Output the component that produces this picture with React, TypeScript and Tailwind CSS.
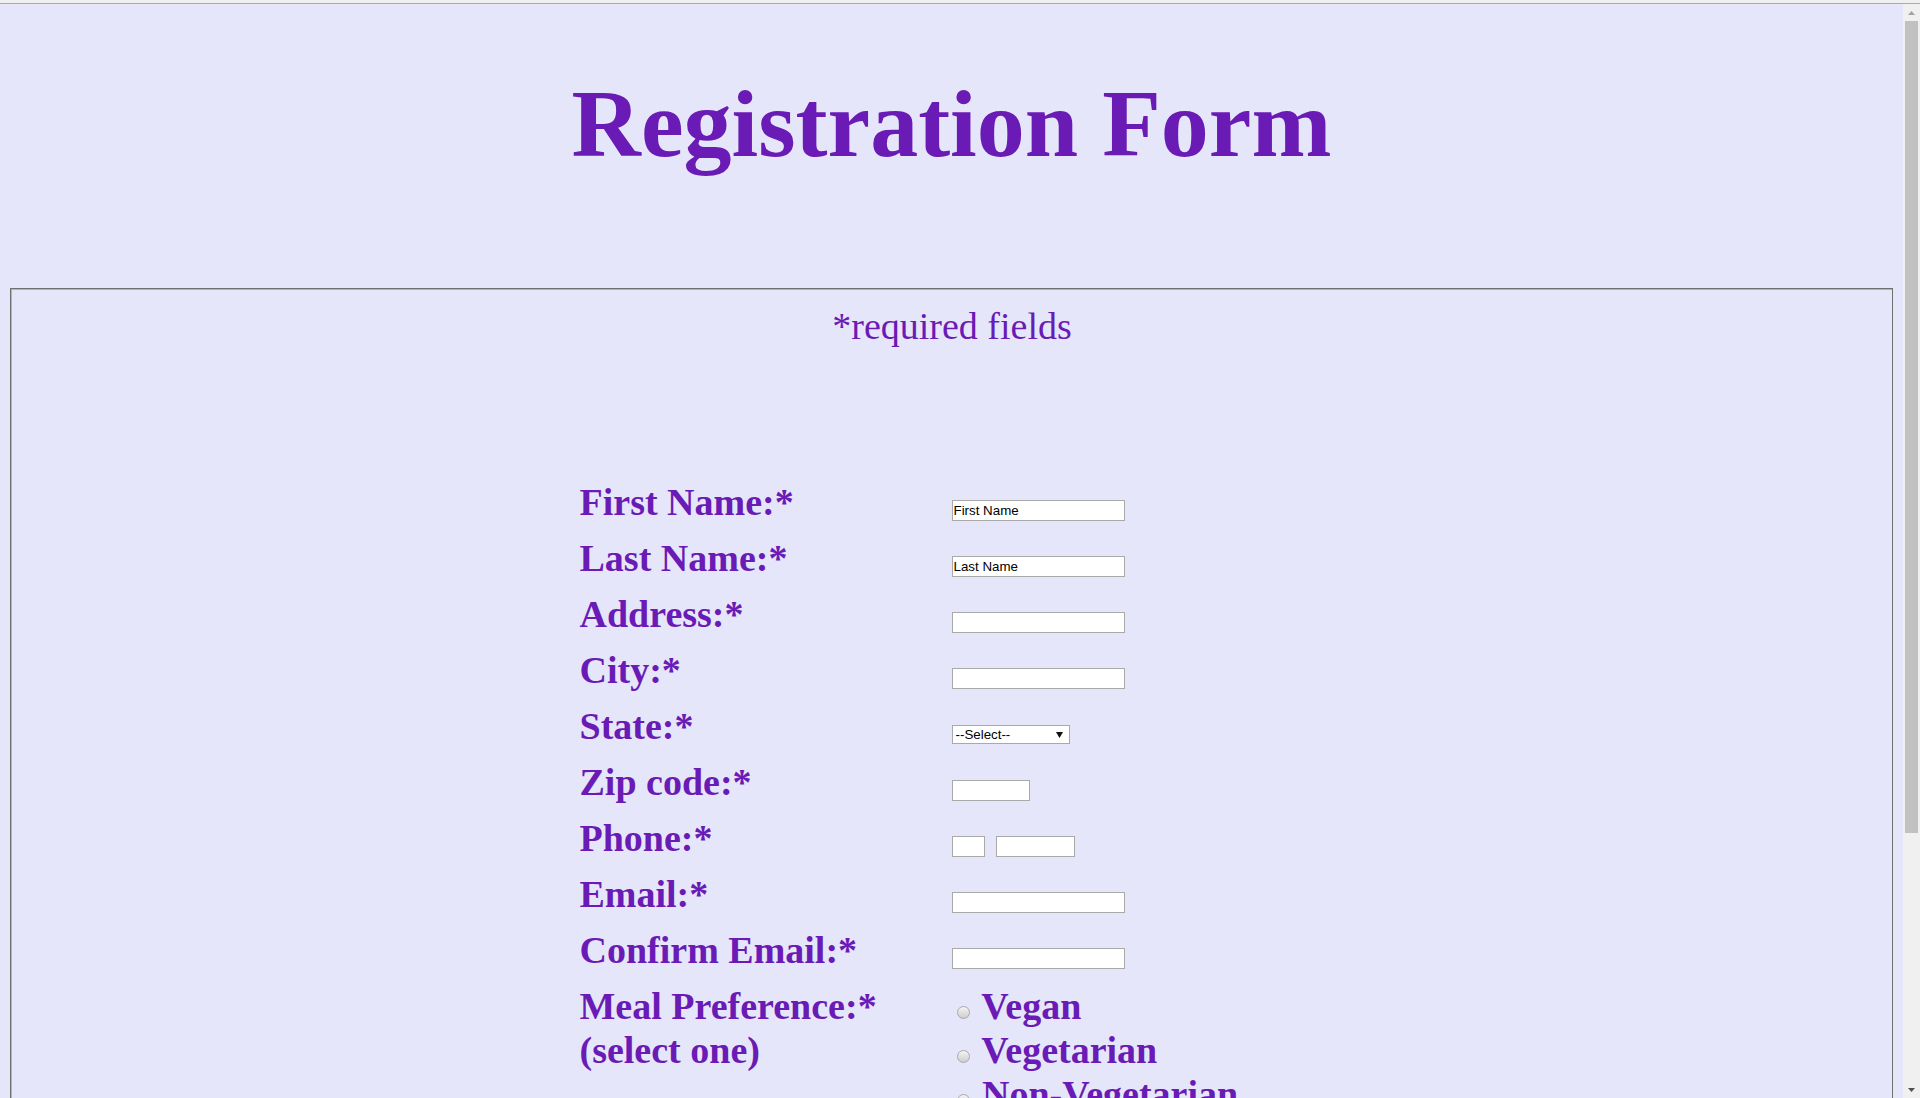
import React from "react";

const inputCls =
  "h-[21px] border border-[#a9a9a9] bg-white px-[1px] py-[1px] text-[13.33px] leading-[15px] font-normal text-black font-['Liberation_Sans',Arial,sans-serif] outline-none";

function Radio({ label }: { label: string }) {
  return (
    <div className="leading-[44px] whitespace-nowrap">
      <span className="inline-block w-[13px] h-[13px] ml-[5px] mr-[3px] rounded-full border border-[#a9a9a9] bg-linear-to-b from-[#f4f4f4] to-[#cdcdcd]" />{" "}
      {label}
    </div>
  );
}

function Row({ label, children }: { label: React.ReactNode; children: React.ReactNode }) {
  return (
    <div className="flex items-baseline">
      <div className="w-[372px] shrink-0 leading-[44px]">{label}</div>
      <div className="flex items-baseline">{children}</div>
    </div>
  );
}

function Scrollbar() {
  return (
    <div className="w-[17px] shrink-0 bg-[#f0f0f0] flex flex-col">
      <div className="h-[17px] flex items-center justify-center">
        <svg width="7" height="4" viewBox="0 0 7 4">
          <polygon points="3.5,0 7,4 0,4" fill="#a3a3a3" />
        </svg>
      </div>
      <div className="h-[812px] mx-[2px] bg-[#c1c1c1]" />
      <div className="flex-1" />
      <div className="h-[17px] flex items-center justify-center">
        <svg width="7" height="4" viewBox="0 0 7 4">
          <polygon points="0,0 7,0 3.5,4" fill="#505050" />
        </svg>
      </div>
    </div>
  );
}

export default function App() {
  return (
    <div className="h-[1098px] w-full overflow-hidden bg-[#e6e6fa] flex flex-col">
      <div className="h-[3px] bg-[#f0f0f0] shrink-0" />
      <div className="h-px bg-[#a9a9a9] shrink-0" />
      <div className="flex flex-1 min-h-0">
        <main className="flex-1 min-w-0 overflow-hidden font-['Liberation_Serif','Times_New_Roman',serif] text-[#6a1bb5]">
          <h1 className="mt-[65px] text-center text-[96px] leading-[110px] font-bold">
            Registration Form
          </h1>
          <div className="mt-[109px] mx-[10px] border border-[#707070]">
            <div className="border-t border-l border-[#b4b4b4] pt-[14px] pb-[40px]">
              <p className="text-center text-[38px] leading-[44px]">*required fields</p>
              <div className="mt-[132px] w-[745px] mx-auto flex flex-col gap-[12px] text-[38px] font-bold">
                <Row label="First Name:*">
                  <input className={`${inputCls} w-[173px]`} defaultValue="First Name" />
                </Row>
                <Row label="Last Name:*">
                  <input className={`${inputCls} w-[173px]`} defaultValue="Last Name" />
                </Row>
                <Row label="Address:*">
                  <input className={`${inputCls} w-[173px]`} />
                </Row>
                <Row label="City:*">
                  <input className={`${inputCls} w-[173px]`} />
                </Row>
                <Row label="State:*">
                  <div className="inline-flex items-center justify-between w-[118px] h-[19px] border border-[#a9a9a9] bg-white pl-[3px] pr-[6px] text-[13.33px] leading-[15px] font-normal text-black font-['Liberation_Sans',Arial,sans-serif]">
                    <span>--Select--</span>
                    <svg width="7" height="6" viewBox="0 0 7 6">
                      <polygon points="0,0 7,0 3.5,6" fill="#111" />
                    </svg>
                  </div>
                </Row>
                <Row label="Zip code:*">
                  <input className={`${inputCls} w-[78px]`} />
                </Row>
                <Row label="Phone:*">
                  <input className={`${inputCls} w-[33px]`} />
                  <input className={`${inputCls} w-[79px] ml-[11px]`} />
                </Row>
                <Row label="Email:*">
                  <input className={`${inputCls} w-[173px]`} />
                </Row>
                <Row label="Confirm Email:*">
                  <input className={`${inputCls} w-[173px]`} />
                </Row>
                <Row
                  label={
                    <>
                      Meal Preference:*
                      <br />
                      (select one)
                    </>
                  }
                >
                  <div className="flex flex-col">
                    <Radio label="Vegan" />
                    <Radio label="Vegetarian" />
                    <Radio label="Non-Vegetarian" />
                  </div>
                </Row>
              </div>
            </div>
          </div>
        </main>
        <Scrollbar />
      </div>
    </div>
  );
}
